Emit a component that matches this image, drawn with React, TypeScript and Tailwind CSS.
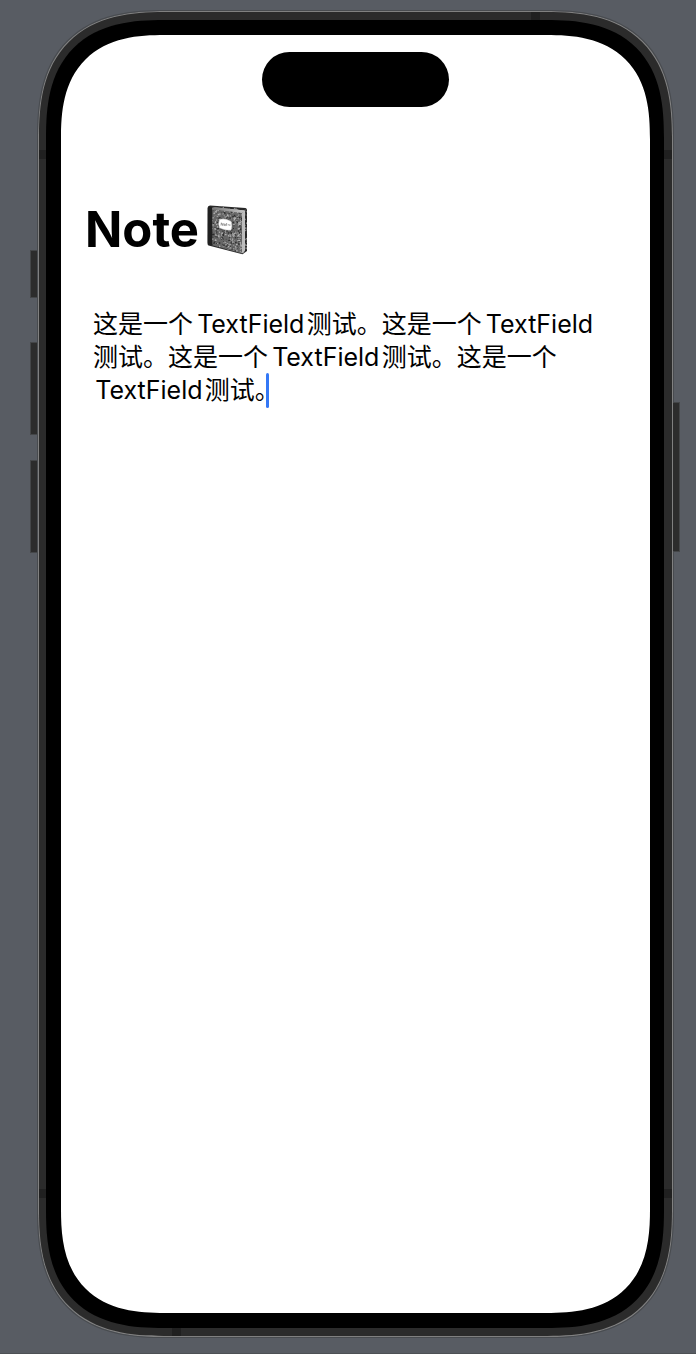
import { useState } from "react";

const SIX_PER_EM = "\u2006";
const HAIR = "\u200A";
const FIELD = "TextField" + HAIR + "测试。";
const INITIAL_NOTE = ("这是一个" + SIX_PER_EM + FIELD).repeat(3) + "这是一个\n" + HAIR + FIELD;

// Small deterministic generator for the marbled cover.
function speckles() {
  let seed = 17;
  const next = () => {
    seed = (seed * 16807) % 2147483647;
    return seed / 2147483647;
  };
  return Array.from({ length: 620 }, () => ({
    x: Math.round(next() * 400) / 10,
    y: Math.round(next() * 490) / 10,
    w: 0.6 + Math.round(next() * 9) / 10,
    light: next() > 0.45,
  }));
}

const SPECKLES = speckles();

function Notebook() {
  return (
    <svg className="h-[50px] w-[41px]" viewBox="0 0 41 50" role="img" aria-label="Notebook">
      <defs>
        <clipPath id="cover">
          <path d="M5 3 L36 6.5 L36 48.5 L5 40 Z" />
        </clipPath>
        <clipPath id="back">
          <path d="M2 .8 L38.5 3.5 Q40 4 40 5.5 V46 L36 48.5 V7 L5 3 Z" />
        </clipPath>
        <linearGradient id="pages" x1="0" x2="1">
          <stop offset="0" stopColor="#777" />
          <stop offset="1" stopColor="#c4c4c4" />
        </linearGradient>
      </defs>
      <path d="M3 .5 L38.5 3 Q40 3.5 40 5 V46 L35.5 49.3 L1.5 40.5 Q.5 40 .5 38 V3 Q.7 .7 3 .5Z" fill="#292929" />
      <g clipPath="url(#back)">
        {SPECKLES.map((s, i) => (
          <rect key={i} x={s.x} y={s.y} width={s.w} height={s.w} fill={s.light ? "#888" : "#222"} />
        ))}
      </g>
      <path d="M5 2.8 L8 2.3 L38 5.5 V45.5 L36 47.5 V7.5Z" fill="url(#pages)" />
      <path d="M5 3.6 L35 7.6 V48.5 L5 40.2Z" fill="#666" />
      <g clipPath="url(#cover)">
        {SPECKLES.map((s, i) => (
          <rect key={i} x={s.x} y={s.y} width={s.w} height={s.w} fill={s.light ? "#b4b4b4" : "#2c2c2c"} />
        ))}
      </g>
      <path d="M1 3 Q1.5 1.2 3 1.5 L5.3 3 V40.3 L1.5 39.5 Q.8 39 .8 37Z" fill="#202020" />
      <path d="M5 2.8 L8 2.3 L37.4 5.6 L35 8 L5 4.2Z" fill="url(#pages)" />
      <path d="M35 8 L37.4 5.8 V46 L35 48.6Z" fill="#bdbdbd" />
      <path d="M12.5 14.4 Q19 13.2 24 16.4 Q25.5 20.5 24 25 Q18 25.8 12.5 22.8 Q11 18.5 12.5 14.4Z" fill="#fff" stroke="#ddd" strokeWidth=".5" />
      <path d="M14 20.5 L14.4 17.8 L15.8 20.6 L16.2 18 M17.2 19 l1.2 .2 v1.4 l-1.2-.2z M19.6 18 v2.8 M20.8 19.8 h1.2 M22.8 19.2 v1.8" fill="none" stroke="#777" strokeWidth=".7" />
    </svg>
  );
}

function SideButton({ className }: { className: string }) {
  return <div className={`border-y border-[#444648] bg-[#2c2c2c] ${className}`} />;
}

export default function App() {
  const [note, setNote] = useState(INITIAL_NOTE);

  return (
    <div className="flex min-h-screen border-b border-[#4d5054] bg-[#585c63] pb-4 pl-[30px] pr-4 pt-[11px] font-['Inter','Noto_Sans_CJK_SC',sans-serif]">
      <div className="flex w-2 flex-col pt-[239px]">
        <SideButton className="h-[48px] border-l" />
        <SideButton className="mt-11 h-[93px] border-l" />
        <SideButton className="mt-[25px] h-[93px] border-l" />
      </div>

      <div className="flex min-w-0 flex-1 flex-col overflow-hidden rounded-[128px] border border-[#808080] bg-[#2b2b2b] outline outline-[#484b4f] [corner-shape:superellipse(1.37)]">
        <div className="flex h-2 justify-end pr-[132px]">
          <div className="w-[9px] bg-[#202020]" />
        </div>
        <div className="flex flex-1">
          <div className="flex w-[7px] flex-col justify-between py-[130px]">
            <div className="h-[9px] bg-[#202020]" />
            <div className="h-[9px] bg-[#202020]" />
          </div>

          <div className="flex min-w-0 flex-1 flex-col rounded-[118px] bg-black py-[15px] pl-[15px] pr-[14px] [corner-shape:superellipse(1.37)]">
            <main className="flex flex-1 flex-col rounded-[104px] bg-white px-6 pt-[17px] text-black [corner-shape:superellipse(1.37)]">
              <div className="h-[55px] w-[187px] self-center rounded-full bg-black" />
              <h1 className="mt-[95px] flex items-center gap-2 text-[49px] font-bold leading-[56px]">
                <label htmlFor="note">Note</label>
                <Notebook />
              </h1>
              <div className="relative mt-[50px] flex flex-1 flex-col pl-2 pr-6">
                <textarea
                  id="note"
                  value={note}
                  onChange={(e) => setNote(e.target.value)}
                  spellCheck={false}
                  className="w-full flex-1 resize-none overflow-hidden bg-transparent text-[25px] leading-[33px] outline-none"
                />
                <span aria-hidden="true" className="absolute left-[181px] top-[65px] h-[35px] w-[3px] rounded-full bg-[#3478f6]" />
              </div>
            </main>
          </div>

          <div className="flex w-2 flex-col justify-between py-[130px]">
            <div className="h-[9px] bg-[#202020]" />
            <div className="h-[9px] bg-[#202020]" />
          </div>
        </div>
        <div className="flex h-2 pl-[133px]">
          <div className="w-[9px] bg-[#202020]" />
        </div>
      </div>

      <div className="flex w-[7px] flex-col pt-[391px]">
        <SideButton className="h-[150px] border-r" />
      </div>
    </div>
  );
}
